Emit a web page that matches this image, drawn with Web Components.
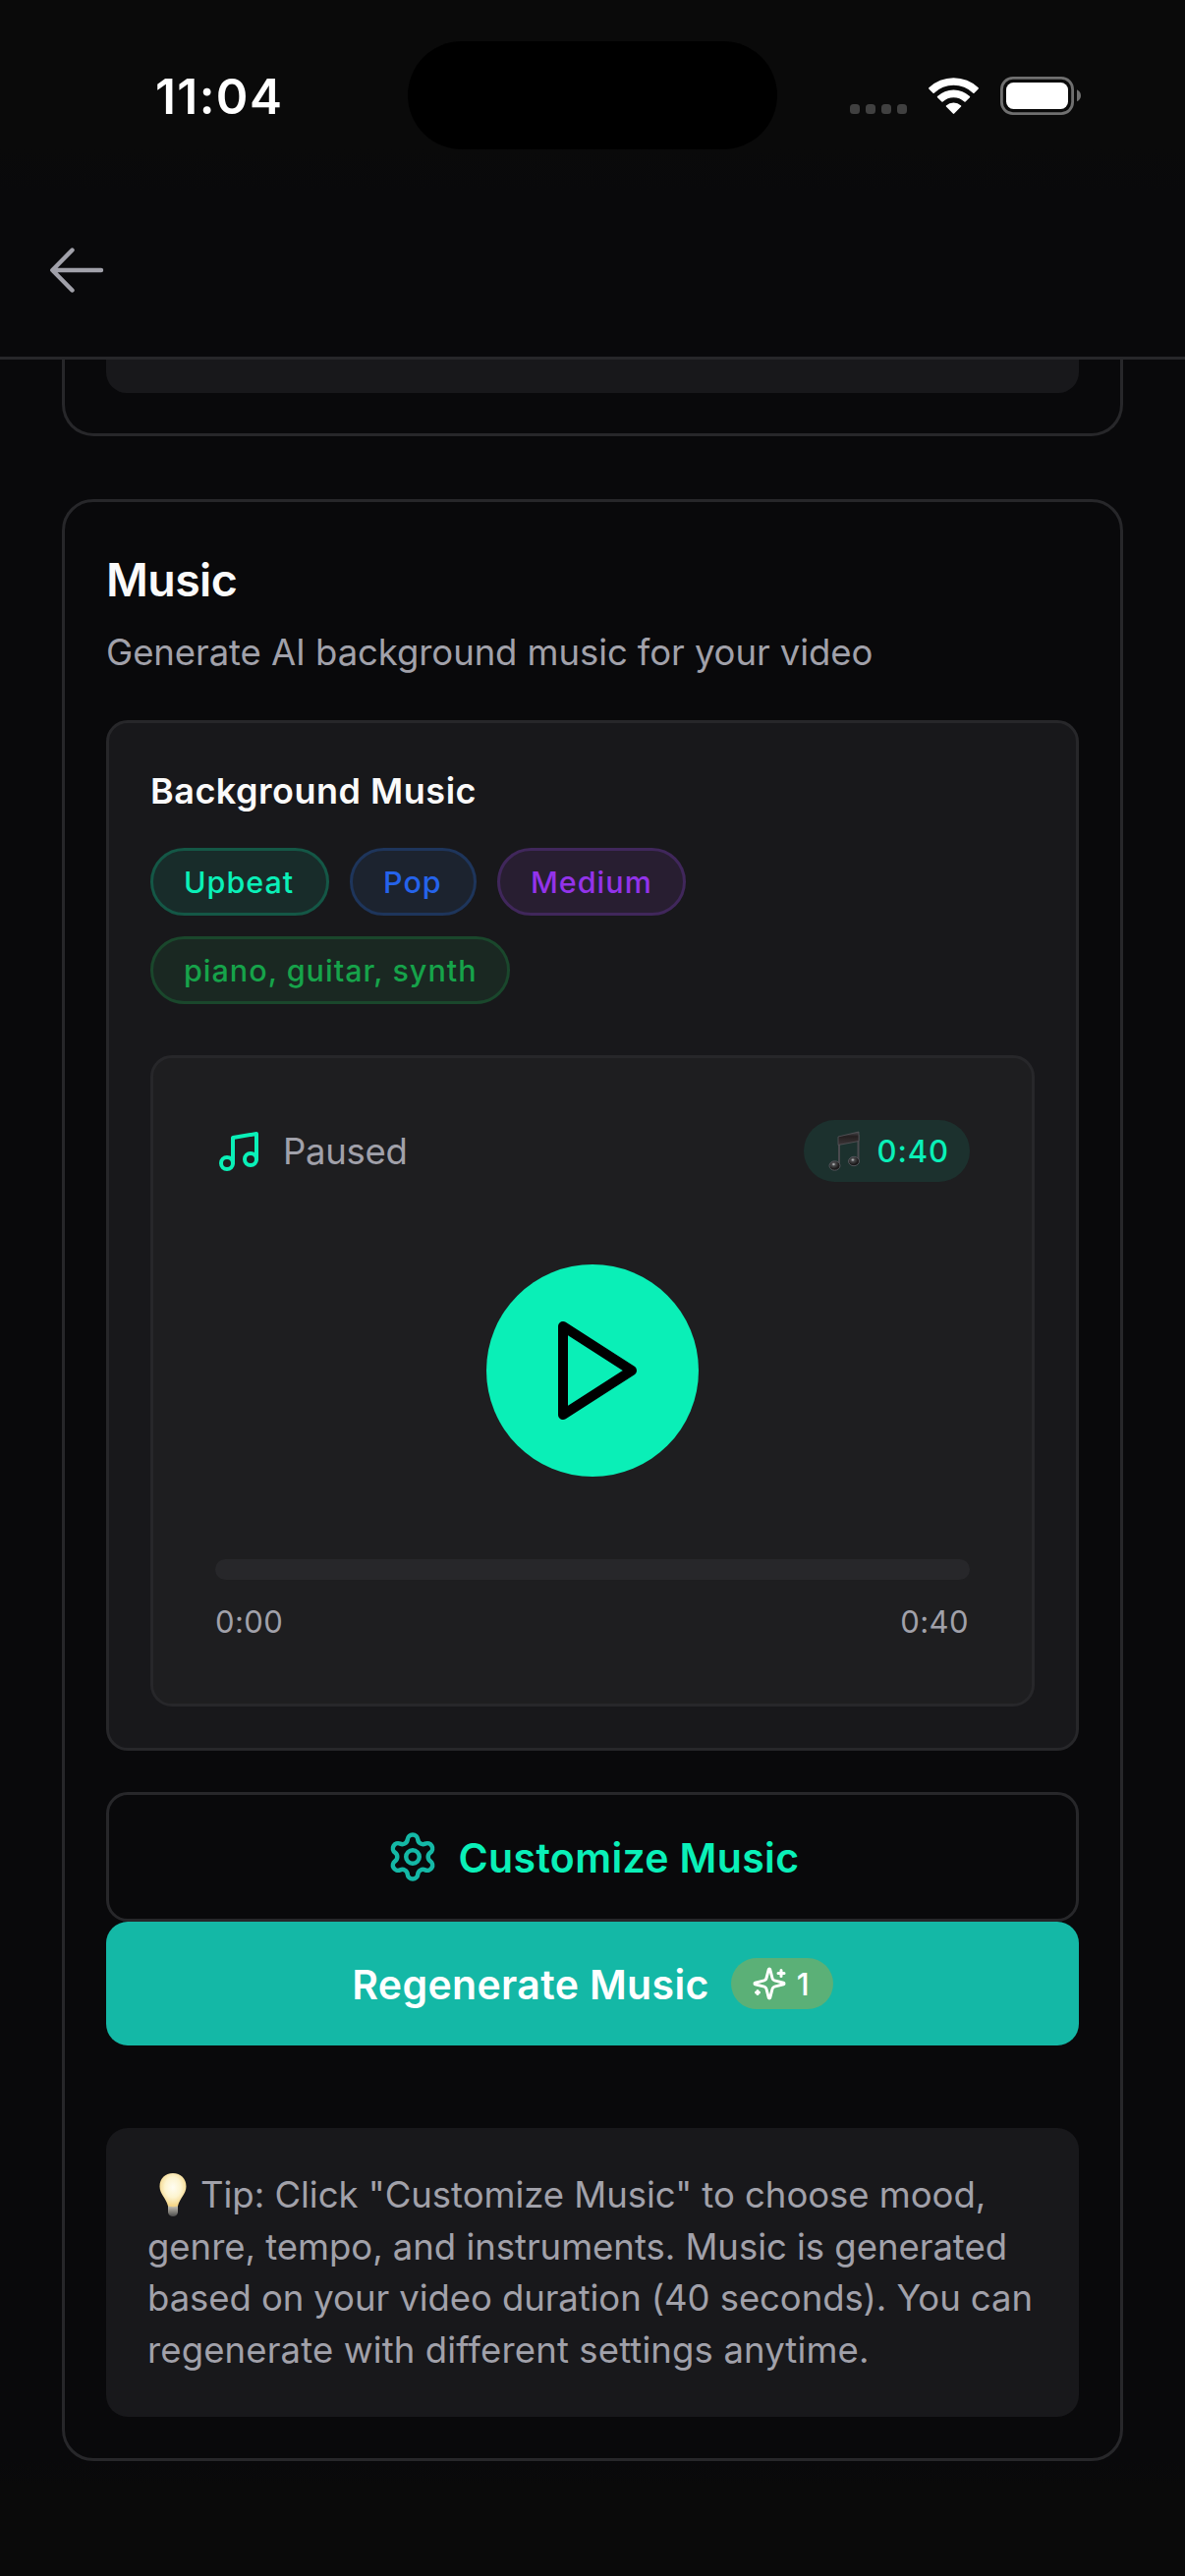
<!DOCTYPE html>
<html lang="en">
<head>
<meta charset="utf-8">
<title>Music</title>
<style>
    body {
        margin: 0;
        background: #09090b;
        font-family: Inter, "Liberation Sans", sans-serif;
        color: #fafafa;
    }
</style>
</head>
<body>
<music-screen></music-screen>

<script>
class BaseElement extends HTMLElement {
    constructor() {
        super();

        const template = document.createElement('template');
        template.innerHTML = this.constructor.TEMPLATE;

        this.shadow = this.attachShadow({ mode: 'open' });
        this.shadow.appendChild(template.content.cloneNode(true));
    }
}

class StatusBar extends BaseElement {

    static TEMPLATE = `
<style>
    :host {
        display: grid;
        grid-template-columns: 415px 376px 1fr;
        height: 152px;
        padding-top: 42px;
        box-sizing: border-box;
        background: #0a0a0a;
    }

    .time {
        padding-left: 158px;
        font-size: 49.5px;
        font-weight: 600;
        line-height: 112px;
        letter-spacing: 1.4px;
        color: #fff;
    }

    .island {
        height: 110px;
        border-radius: 55px;
        background: #000;
    }

    .right svg {
        display: block;
        margin: 18px 0 0 49px;
    }
</style>

<div class="time">11:04</div>
<div class="island"></div>
<div class="right">
    <svg width="290" height="80" viewBox="0 0 290 80">
        <g fill="#404040">
            <rect x="25" y="46" width="10" height="10" rx="3.5"/>
            <rect x="41" y="46" width="10" height="10" rx="3.5"/>
            <rect x="57" y="46" width="10" height="10" rx="3.5"/>
            <rect x="73" y="46" width="10" height="10" rx="3.5"/>
        </g>
        <g fill="#fff">
            <path d="M105.3 29.3a36.5 36.5 0 0 1 50.4 0q.5.6 0 1.2l-4.2 4.2q-.6.5-1.2 0a28.5 28.5 0 0 0-39.6 0q-.6.5-1.2 0l-4.2-4.2q-.5-.6 0-1.2z"/>
            <path d="M114 38.1a24 24 0 0 1 33 0q.5.6 0 1.2l-4.4 4.3q-.6.5-1.2 0a16 16 0 0 0-21.8 0q-.6.5-1.2 0l-4.4-4.3q-.5-.6 0-1.2z"/>
            <path d="M122.9 47.4a11.5 11.5 0 0 1 15.2 0q.5.6 0 1.2l-6.9 7q-.7.6-1.4 0l-6.9-7q-.5-.6 0-1.2z"/>
        </g>
        <rect x="179.4" y="19.4" width="72.2" height="36.2" rx="11.5" fill="none" stroke="#707070" stroke-width="2.8"/>
        <rect x="184" y="24" width="63" height="27" rx="7.5" fill="#fff"/>
        <path d="M256 31.3q4 2 4 6t-4 6z" fill="#707070"/>
    </svg>
</div>
`;
}

class NavHeader extends BaseElement {

    static TEMPLATE = `
<style>
    :host {
        display: flex;
        align-items: center;
        height: 214px;
        padding: 0 0 0 42px;
        box-sizing: border-box;
        border-bottom: 3px solid #27272a;
        background: linear-gradient(#0a0a0a, #09090b 20%);
    }

    svg {
        margin-top: 35px;
    }
</style>

<svg width="72" height="60" viewBox="0 0 72 60" fill="none" stroke="#a1a1aa" stroke-width="4.4" stroke-linecap="round" stroke-linejoin="round">
    <path d="M61 30H11.5M31.5 9.5 11.3 30 31.5 50.5"/>
</svg>
`;
}

class SectionCard extends BaseElement {

    static TEMPLATE = `
<style>
    :host {
        display: block;
        box-sizing: border-box;
        width: 1080px;
        margin: 0 auto;
        padding: 0 42px 42px;
        border: 3px solid #27272a;
        border-radius: 32px;
    }

    :host([cut]) {
        border-top: 0;
        border-radius: 0 0 32px 32px;
    }
</style>

<slot></slot>
`;
}

class TagChip extends BaseElement {

    static TEMPLATE = `
<style>
    :host {
        display: block;
        box-sizing: border-box;
        height: 69px;
        padding-left: 31px;
        border: 3px solid var(--line);
        border-radius: 35px;
        background: var(--fill);
        color: var(--ink);
        font-size: 30.5px;
        font-weight: 500;
        line-height: 64px;
        letter-spacing: 1px;
        white-space: nowrap;
    }

    :host([tone="mood"]) {
        width: 182px;
        --fill: #182c2a;
        --line: #145746;
        --ink: #0af0b8;
    }

    :host([tone="genre"]) {
        width: 129px;
        --fill: #1c232f;
        --line: #1e355b;
        --ink: #2563eb;
    }

    :host([tone="tempo"]) {
        width: 192px;
        --fill: #281e31;
        --line: #40275b;
        --ink: #9333ea;
    }

    :host([tone="instruments"]) {
        width: 366px;
        --fill: #1a2822;
        --line: #1a472c;
        --ink: #16a34a;
    }
</style>

<slot></slot>
`;
}

class AudioPlayer extends BaseElement {

    static TEMPLATE = `
<style>
    :host {
        display: block;
        box-sizing: border-box;
        height: 663px;
        padding: 63px;
        border: 3px solid #27272a;
        border-radius: 22px;
        background: #1e1e20;
        color: #a1a1aa;
    }

    .top,
    .times {
        display: flex;
        justify-content: space-between;
    }

    .state {
        display: flex;
        align-items: center;
        gap: 21px;
        height: 63px;
        font-size: 36.5px;
        letter-spacing: -0.3px;
    }

    .length {
        display: flex;
        align-items: center;
        box-sizing: border-box;
        width: 169px;
        height: 63px;
        padding-left: 24px;
        gap: 14.5px;
        border-radius: 32px;
        background: #1c312e;
        color: #0af0b8;
        font-size: 31px;
        font-weight: 500;
        letter-spacing: 0.9px;
    }

    .play {
        width: 216px;
        height: 216px;
        margin: 84px auto;
        border-radius: 50%;
        background: #0aefb7;
    }

    .play svg {
        display: block;
        padding: 48px 0 0 53px;
    }

    .track {
        height: 21px;
        border-radius: 11px;
        background: #27272a;
    }

    .times {
        margin-top: 18px;
        padding: 0 1px 0 0;
        font-size: 31px;
        line-height: 49px;
        letter-spacing: 0.4px;
    }
</style>

<div class="top">
    <div class="state">
        <svg width="48" height="48" viewBox="0 0 24 24" fill="none" stroke="#0af0b8" stroke-width="2" stroke-linecap="round" stroke-linejoin="round">
            <path d="M9 18V5l12-2v13"/>
            <circle cx="6" cy="18" r="3"/>
            <circle cx="18" cy="16" r="3"/>
        </svg>
        <span id="state"></span>
    </div>
    <div class="length">
        <svg width="36" height="44" viewBox="0 0 36 44">
            <defs>
                <linearGradient id="beam" x1="0" y1="0" x2="0" y2="1">
                    <stop offset="0" stop-color="#4a4a4e"/>
                    <stop offset=".35" stop-color="#241f20"/>
                    <stop offset="1" stop-color="#3c3537"/>
                </linearGradient>
                <radialGradient id="head" cx=".4" cy=".35">
                    <stop offset="0" stop-color="#c8ccce"/>
                    <stop offset=".35" stop-color="#4a4a4c"/>
                    <stop offset="1" stop-color="#1b191a"/>
                </radialGradient>
            </defs>
            <path d="M12 36V9M31.5 31V5" stroke="#4a4a4e" stroke-width="2"/>
            <path d="M11 7 32 2v9.5L11 15.5z" fill="url(#beam)" stroke="#57565a" stroke-width=".8"/>
            <ellipse cx="7.5" cy="36.5" rx="5.5" ry="4.7" fill="url(#head)" stroke="#515459"/>
            <ellipse cx="27" cy="32" rx="5.5" ry="4.7" fill="url(#head)" stroke="#515459"/>
        </svg>
        <span class="total"></span>
    </div>
</div>
<div class="play">
    <svg width="120" height="120" viewBox="0 0 24 24" fill="none" stroke="#000" stroke-width="2" stroke-linecap="round" stroke-linejoin="round">
        <path d="M5 3l14 9-14 9z"/>
    </svg>
</div>
<div class="track"></div>
<div class="times">
    <span id="current"></span>
    <span class="total"></span>
</div>
`;

    connectedCallback() {
        this.shadow.getElementById('state').textContent = this.getAttribute('state');
        this.shadow.getElementById('current').textContent = this.getAttribute('current');
        this.shadow.querySelectorAll('.total').forEach(e => {
            e.textContent = this.getAttribute('total');
        });
    }
}

class ActionButton extends BaseElement {

    static TEMPLATE = `
<style>
    :host {
        display: flex;
        align-items: center;
        justify-content: center;
        box-sizing: border-box;
        height: 126px;
        border-radius: 22px;
        background: #14b8a6;
        color: #fff;
        font-size: 41px;
        font-weight: 600;
        letter-spacing: 0.35px;
        white-space: nowrap;
    }

    :host([outline]) {
        height: 132px;
        border: 3px solid #27272a;
        background: none;
        color: #0af0b8;
    }

    .label {
        padding-top: 2px;
    }
</style>

<slot name="icon"></slot>
<span class="label"><slot></slot></span>
<slot name="badge"></slot>
`;
}

class CreditBadge extends BaseElement {

    static TEMPLATE = `
<style>
    :host {
        display: flex;
        align-items: center;
        box-sizing: border-box;
        width: 104px;
        height: 52px;
        padding-left: 21px;
        gap: 10px;
        border-radius: 26px;
        background: #5bb077;
        font-size: 31px;
        font-weight: 500;
        letter-spacing: 0;
    }
</style>

<svg width="36" height="36" viewBox="0 0 24 24" fill="none" stroke="#fff" stroke-width="2" stroke-linecap="round" stroke-linejoin="round">
    <path d="M9.937 15.5A2 2 0 0 0 8.5 14.063l-6.135-1.582a.5.5 0 0 1 0-.962L8.5 9.936A2 2 0 0 0 9.937 8.5l1.582-6.135a.5.5 0 0 1 .963 0L14.063 8.5A2 2 0 0 0 15.5 9.937l6.135 1.581a.5.5 0 0 1 0 .964L15.5 14.063a2 2 0 0 0-1.437 1.437l-1.582 6.135a.5.5 0 0 1-.963 0z"/>
    <path d="M20 3v4M22 5h-4M4 17v2M5 18H3"/>
</svg>
<slot></slot>
`;
}

class TipBox extends BaseElement {

    static TEMPLATE = `
<style>
    :host {
        display: block;
        box-sizing: border-box;
        height: 294px;
        padding: 42px;
        border-radius: 22px;
        background: #18181b;
        color: #a1a1aa;
        font-size: 36.5px;
        line-height: 52.5px;
        letter-spacing: -0.03px;
        white-space: nowrap;
    }

    svg {
        width: 54px;
        height: 50px;
        vertical-align: -11px;
    }
</style>

<svg viewBox="0 0 54 50">
    <defs>
        <radialGradient id="glow" cx=".5" cy=".42" r=".6">
            <stop offset="0" stop-color="#fffdf2"/>
            <stop offset=".5" stop-color="#fdf4cf"/>
            <stop offset="1" stop-color="#f2cf7a"/>
        </radialGradient>
        <linearGradient id="base" x1="0" y1="0" x2="0" y2="1">
            <stop offset="0" stop-color="#c9c5b8"/>
            <stop offset="1" stop-color="#4c4c4c"/>
        </linearGradient>
    </defs>
    <path d="M21 37h10v7q-1 4-5 4t-5-4z" fill="url(#base)"/>
    <path d="M26 4c8 0 13.5 5.5 13.5 13.5 0 8-6.5 11.5-8.5 20q-5 1.5-10 0C19 29 12.5 25.5 12.5 17.5 12.5 9.5 18 4 26 4z" fill="url(#glow)"/>
</svg><slot></slot>
`;
}

class MusicScreen extends BaseElement {

    static TEMPLATE = `
<style>
    :host {
        display: block;
        height: 2622px;
        overflow: hidden;
        background: linear-gradient(#09090b 2505px, #0a0a0a 2530px);
    }

    .previous {
        height: 78px;
        margin-bottom: 64px;
    }

    .previous div {
        height: 34px;
        border-radius: 0 0 21px 21px;
        background: #18181b;
    }

    h1 {
        margin: 0;
        padding-top: 49px;
        font-size: 46.5px;
        font-weight: 600;
        line-height: 60px;
        letter-spacing: -0.6px;
    }

    p {
        margin: 17px 0 42px;
        font-size: 36.5px;
        line-height: 54px;
        letter-spacing: -0.08px;
        color: #a1a1aa;
    }

    .panel {
        padding: 45px 42px 42px;
        margin-bottom: 42px;
        border: 3px solid #27272a;
        border-radius: 22px;
        background: #18181b;
    }

    h2 {
        margin: 0 0 34px;
        font-size: 36px;
        font-weight: 600;
        line-height: 48px;
        letter-spacing: 0.5px;
    }

    .chips {
        display: flex;
        flex-wrap: wrap;
        gap: 21px;
        width: 600px;
        margin-bottom: 52px;
    }

    .gear {
        margin-right: 20px;
    }

    credit-badge {
        margin-left: 22px;
    }

    tip-box {
        margin-top: 84px;
    }

    .tight {
        letter-spacing: -0.08px;
    }

    .loose {
        letter-spacing: 0.13px;
    }
</style>

<status-bar></status-bar>
<nav-header></nav-header>

<section-card class="previous" cut><div></div></section-card>

<section-card>
    <h1>Music</h1>
    <p>Generate AI background music for your video</p>

    <div class="panel">
        <h2>Background Music</h2>
        <div class="chips">
            <tag-chip tone="mood">Upbeat</tag-chip>
            <tag-chip tone="genre">Pop</tag-chip>
            <tag-chip tone="tempo">Medium</tag-chip>
            <tag-chip tone="instruments">piano, guitar, synth</tag-chip>
        </div>
        <audio-player state="Paused" current="0:00" total="0:40"></audio-player>
    </div>

    <action-button outline>
        <svg class="gear" slot="icon" width="54" height="54" viewBox="0 0 24 24" fill="none" stroke="#14b8a6" stroke-width="2" stroke-linecap="round" stroke-linejoin="round">
            <path d="M9.671 4.136a2.34 2.34 0 0 1 4.659 0 2.34 2.34 0 0 0 3.319 1.915 2.34 2.34 0 0 1 2.33 4.033 2.34 2.34 0 0 0 0 3.831 2.34 2.34 0 0 1-2.33 4.033 2.34 2.34 0 0 0-3.319 1.915 2.34 2.34 0 0 1-4.659 0 2.34 2.34 0 0 0-3.32-1.915 2.34 2.34 0 0 1-2.33-4.033 2.34 2.34 0 0 0 0-3.831A2.34 2.34 0 0 1 6.35 6.051a2.34 2.34 0 0 0 3.319-1.915"/>
            <circle cx="12" cy="12" r="3"/>
        </svg>
        Customize Music
    </action-button>
    <action-button>
        Regenerate Music
        <credit-badge slot="badge">1</credit-badge>
    </action-button>

    <tip-box>Tip: Click "Customize Music" to choose mood,<br>genre, tempo, and instruments. Music is generated<br><span class="tight">based on your video duration (40 seconds). You can</span><br><span class="loose">regenerate with different settings anytime.</span></tip-box>
</section-card>
`;
}

customElements.define('status-bar', StatusBar);
customElements.define('nav-header', NavHeader);
customElements.define('section-card', SectionCard);
customElements.define('tag-chip', TagChip);
customElements.define('audio-player', AudioPlayer);
customElements.define('action-button', ActionButton);
customElements.define('credit-badge', CreditBadge);
customElements.define('tip-box', TipBox);
customElements.define('music-screen', MusicScreen);
</script>
</body>
</html>
